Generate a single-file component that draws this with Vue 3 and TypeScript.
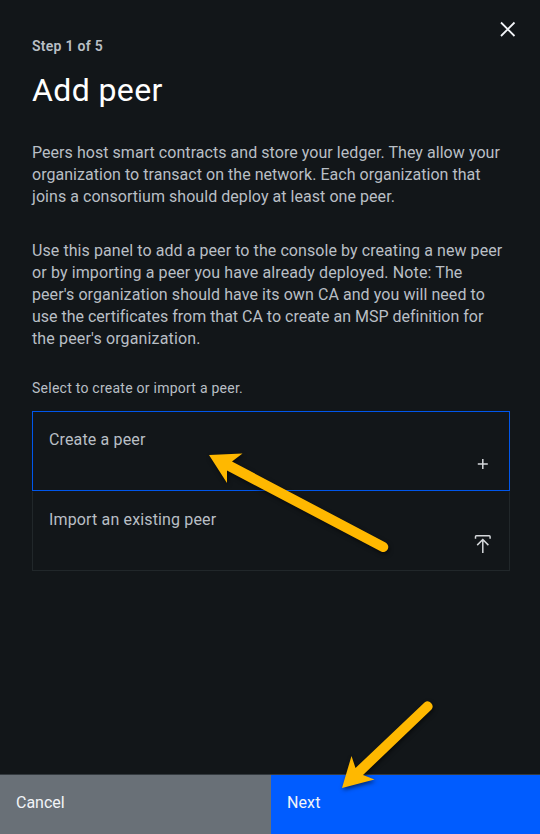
<script setup lang="ts">
import { ref } from 'vue'

interface Line { text: string; spacing: string }

const intro: Line[] = [
  { text: 'Peers host smart contracts and store your ledger. They allow your', spacing: '0.05px' },
  { text: 'organization to transact on the network. Each organization that', spacing: '0.035px' },
  { text: 'joins a consortium should deploy at least one peer.', spacing: '0.05px' },
]
const details: Line[] = [
  { text: 'Use this panel to add a peer to the console by creating a new peer', spacing: '0.075px' },
  { text: 'or by importing a peer you have already deployed. Note: The', spacing: '0.12px' },
  { text: "peer's organization should have its own CA and you will need to", spacing: '0.07px' },
  { text: 'use the certificates from that CA to create an MSP definition for', spacing: '-0.005px' },
  { text: "the peer's organization.", spacing: '0.14px' },
]
type Choice = 'create' | 'import'
const selected = ref<Choice>('create')
</script>

<template>
  <main class="panel">
    <button class="close" aria-label="Close">
      <svg width="16" height="16" viewBox="0 0 16 16"><path d="M1 1.500 14.500 15M14.500 1.500 1 15" /></svg>
    </button>
    <section class="content">
      <p class="step">Step 1 of 5</p>
      <h1>Add peer</h1>
      <p class="body intro"><span v-for="line in intro" :key="line.text" :style="{ letterSpacing: line.spacing }">{{ line.text }}</span></p>
      <p class="body details"><span v-for="line in details" :key="line.text" :style="{ letterSpacing: line.spacing }">{{ line.text }}</span></p>
      <p class="label">Select to create or import a peer.</p>
      <div class="tiles">
        <button class="tile" :class="{ selected: selected === 'create' }" @click="selected = 'create'">
          <span>Create a peer</span>
          <svg width="20" height="20" viewBox="0 0 20 20"><path d="M9.800 5v10M4.800 10h10" /></svg>
        </button>
        <button class="tile" :class="{ selected: selected === 'import' }" @click="selected = 'import'">
          <span>Import an existing peer</span>
          <svg width="20" height="20" viewBox="0 0 20 20"><path d="M2.500 4.800V2.700Q2.500 1.800 3.400 1.800H16.200Q17.100 1.800 17.100 2.700V4.800M9.800 19V5.600M4.200 11.100 9.800 5.500l5.600 5.600" /></svg>
        </button>
      </div>
    </section>
    <footer>
      <button class="cancel">Cancel</button>
      <button class="next">Next</button>
    </footer>
    <svg class="arrows" width="540" height="834" viewBox="0 0 540 834">
      <path d="M209 455 242.500 453.500 232 461.500 385.500 542.500A5 5 0 0 1 381 551.500L227 470.500 227 483Z" />
      <path d="M342 788 351.500 756 355.500 768 424.500 702.500A5 5 0 0 1 431.500 709.500L363 775 374.500 779.500Z" />
    </svg>
  </main>
</template>

<style>
body { background: #121619; }
</style>

<style scoped>
* { box-sizing: border-box; }
.panel { position: relative; display: flex; flex-direction: column; width: 540px; height: 834px; overflow: hidden; background: #121619; color: #b9bfc5; font: 16px/22px Roboto, "Liberation Sans", sans-serif; }
button { border: 0; margin: 0; padding: 0; background: none; color: inherit; font: inherit; text-align: left; }
svg { display: block; fill: none; stroke: #d5d8db; stroke-width: 1.5; }
.close { position: absolute; left: 500px; top: 21px; width: 16px; height: 16px; }
.close svg { stroke-width: 1.8; stroke: #f2f4f8; }
.content { flex: 1; padding: 37px 30px 0 32px; }
p, h1 { margin: 0; }
.step { font-size: 14px; line-height: 18px; font-weight: 600; letter-spacing: 0.28px; }
h1 { margin-top: 15px; font-size: 32px; line-height: 40px; font-weight: 400; letter-spacing: 0.4px; color: #fff; }
.body span { display: block; width: max-content; }
.intro { margin-top: 32px; }
.details { margin-top: 32px; }
.label { margin-top: 29px; font-size: 14px; line-height: 18px; letter-spacing: 0.25px; }
.tiles { display: flex; flex-direction: column; margin-top: 14px; }
.tile { display: flex; justify-content: space-between; width: 478px; height: 80px; padding: 17px 16px 16px; border: 1px solid #21272a; border-top-color: transparent; letter-spacing: 0.15px; }
.tile.selected { border-color: #0056eb; }
.tile svg { align-self: flex-end; }
footer { display: flex; height: 60px; border-top: 1px solid #343a3f; }
footer button { height: 59px; padding: 17px 16px 16px; display: flex; align-items: flex-start; color: #f2f4f8; }
.cancel { width: 271px; background: #697077; }
.next { flex: 1; background: #005cff; letter-spacing: 0.1px; }
.arrows { position: absolute; left: 0; top: 0; pointer-events: none; filter: drop-shadow(1px 2px 2px rgb(0 0 0 / 55%)); }
.arrows path { fill: #ffb800; stroke: none; }
</style>
